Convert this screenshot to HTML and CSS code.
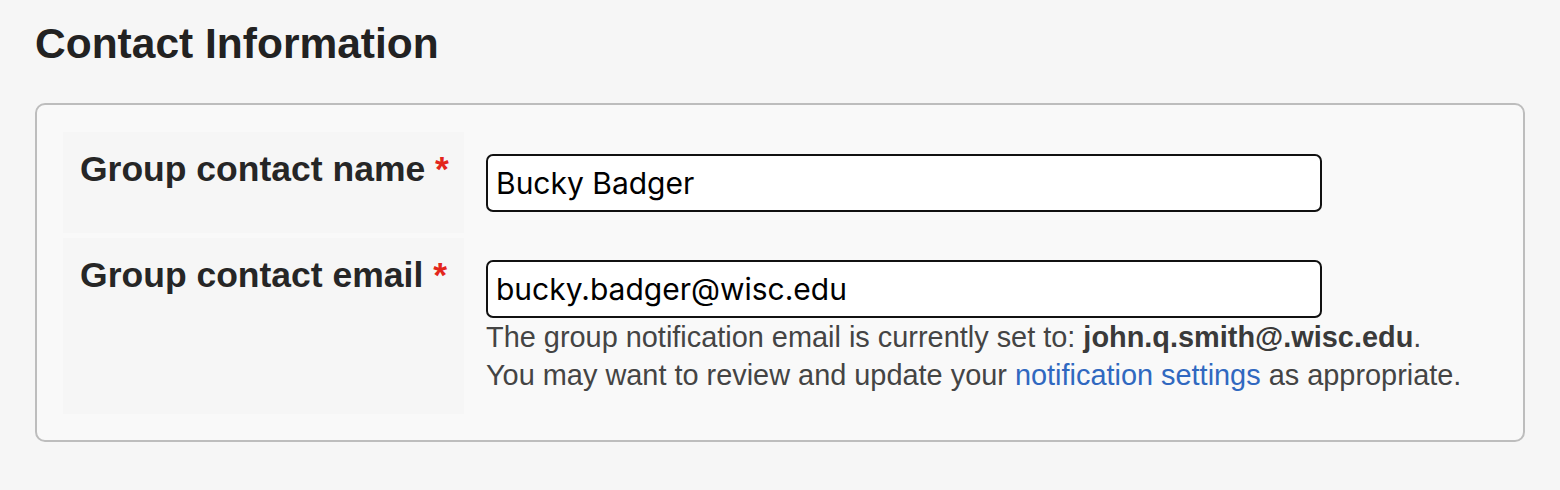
FILE: index.html
```html
<!DOCTYPE html>
<html lang="en">
<head>
<meta charset="utf-8">
<title>Contact Information</title>
<link rel="stylesheet" href="styles.css">
</head>
<body>
<h2 class="title">Contact Information</h2>
<div class="panel">
  <div class="row">
    <label class="label" for="name">Group contact name <span class="req">*</span></label>
    <div class="field">
      <input id="name" class="input" type="text" value="Bucky Badger">
    </div>
  </div>
  <div class="row">
    <label class="label" for="email">Group contact email <span class="req">*</span></label>
    <div class="field">
      <input id="email" class="input" type="text" value="bucky.badger@wisc.edu">
      <p class="help">The group notification email is currently set to: <strong>john.q.smith@.wisc.edu</strong>.<br>You may want to review and update your <a class="link" href="#">notification settings</a> as appropriate.</p>
    </div>
  </div>
</div>
</body>
</html>
```
FILE: styles.css
```css
html, body {
  margin: 0;
  padding: 0;
  background: #f6f6f6;
}
body {
  font-family: "Liberation Sans", Arial, sans-serif;
  color: #222;
}
.title {
  margin: 20px 35px 35px;
  font-size: 42.5px;
  line-height: 48px;
  font-weight: bold;
  color: #222;
}
.panel {
  margin: 0 35px;
  border: 2px solid #bdbdbd;
  border-radius: 10px;
  background: #f9f9f9;
  padding: 27px 26px 26px;
  display: flex;
  flex-direction: column;
  gap: 5px;
}
.row {
  display: grid;
  grid-template-columns: 401px 1fr;
  column-gap: 22px;
}
.label {
  background: #f6f6f6;
  padding: 16px 17px 0;
  font-size: 35.5px;
  line-height: 43px;
  font-weight: bold;
  color: #262626;
  white-space: nowrap;
  text-align: right;
}
.req {
  color: #e3261c;
}
.field {
  padding: 22px 0 21px;
}
.input {
  display: block;
  box-sizing: border-box;
  width: 836px;
  height: 58px;
  margin: 0;
  border: 2px solid #111;
  border-radius: 7px;
  background: #fff;
  padding: 0 8px;
  font-family: Inter, "Liberation Sans", sans-serif;
  font-size: 30px;
  color: #000;
  outline: none;
}
.help {
  margin: 0 0 -1px;
  font-size: 28.9px;
  line-height: 38px;
  color: #444;
}
.help strong {
  color: #3a3a3a;
}
.link {
  color: #3068c0;
  text-decoration: none;
}
```
